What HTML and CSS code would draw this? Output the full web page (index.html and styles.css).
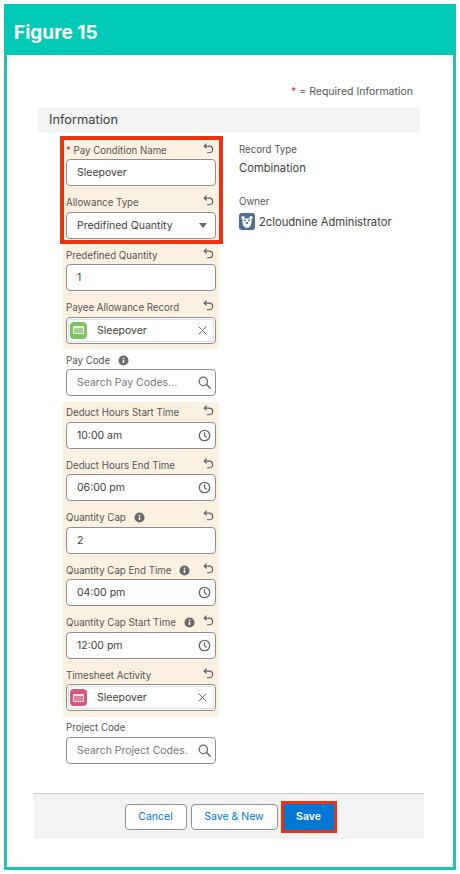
FILE: index.html
```html
<!DOCTYPE html>
<html lang="en">
<head>
    <meta charset="UTF-8">
    <meta name="viewport" content="width=device-width, initial-scale=1.0">
    <title>Figure 15</title>
    <link rel="stylesheet" href="styles.css">
</head>
<body>
    <svg class="sprites" width="0" height="0">
        <symbol id="undo" viewBox="0 0 12 12">
            <path d="M3.6 1 1.2 3.4l2.4 2.3M1.4 3.4h5.2a3.6 3.6 0 0 1 .6 7.2H4.8" fill="none" stroke="#5f5f5f" stroke-width="1.2" stroke-linecap="round" stroke-linejoin="round"/>
        </symbol>
        <symbol id="info" viewBox="0 0 12 12">
            <circle cx="6" cy="6" r="5.5" fill="#6b6b6b"/>
            <rect x="5.2" y="5.2" width="1.6" height="3.6" fill="#fff"/>
            <rect x="5.2" y="2.9" width="1.6" height="1.5" fill="#fff"/>
        </symbol>
        <symbol id="search" viewBox="0 0 14 14">
            <circle cx="5.8" cy="5.8" r="4.5" fill="none" stroke="#666" stroke-width="1.4"/>
            <path d="m9.2 9.2 4 4" stroke="#666" stroke-width="1.6" stroke-linecap="round"/>
        </symbol>
        <symbol id="clock" viewBox="0 0 14 14">
            <circle cx="7" cy="7" r="5.6" fill="none" stroke="#666" stroke-width="1.4"/>
            <path d="M7 3.8V7l2 2" fill="none" stroke="#666" stroke-width="1.3" stroke-linecap="round"/>
        </symbol>
        <symbol id="close" viewBox="0 0 10 10">
            <path d="m1 1 8 8M9 1 1 9" stroke="#666" stroke-width="1.1" stroke-linecap="round"/>
        </symbol>
    </svg>

    <div class="frame">
        <h1 class="frame-title">Figure 15</h1>
        <div class="sheet">
            <p class="required-note"><span class="star">*</span> = Required Information</p>
            <h2 class="section-title">Information</h2>

            <div class="columns">
                <div class="form-col">
                    <div class="changed">
                        <div class="callout">
                            <div class="field">
                                <div class="label-row">
                                    <label><span class="star">*</span> Pay Condition Name</label>
                                    <svg class="undo"><use href="#undo"/></svg>
                                </div>
                                <div class="input">Sleepover</div>
                            </div>
                            <div class="field">
                                <div class="label-row">
                                    <label>Allowance Type</label>
                                    <svg class="undo"><use href="#undo"/></svg>
                                </div>
                                <div class="input">Predifined Quantity<span class="caret"></span></div>
                            </div>
                        </div>
                        <div class="field">
                            <div class="label-row">
                                <label>Predefined Quantity</label>
                                <svg class="undo"><use href="#undo"/></svg>
                            </div>
                            <div class="input">1</div>
                        </div>
                        <div class="field">
                            <div class="label-row">
                                <label>Payee Allowance Record</label>
                                <svg class="undo"><use href="#undo"/></svg>
                            </div>
                            <div class="input lookup">
                                <div class="pill">
                                    <span class="record-icon green"><span class="card"></span></span>
                                    <span class="pill-text">Sleepover</span>
                                    <svg class="x"><use href="#close"/></svg>
                                </div>
                            </div>
                        </div>
                    </div>

                    <div class="field">
                        <div class="label-row">
                            <label>Pay Code</label>
                            <svg class="info"><use href="#info"/></svg>
                        </div>
                        <div class="input placeholder">Search Pay Codes...<svg class="end-icon"><use href="#search"/></svg></div>
                    </div>

                    <div class="changed">
                        <div class="field">
                            <div class="label-row">
                                <label>Deduct Hours Start Time</label>
                                <svg class="undo"><use href="#undo"/></svg>
                            </div>
                            <div class="input">10:00 am<svg class="end-icon"><use href="#clock"/></svg></div>
                        </div>
                        <div class="field">
                            <div class="label-row">
                                <label>Deduct Hours End Time</label>
                                <svg class="undo"><use href="#undo"/></svg>
                            </div>
                            <div class="input">06:00 pm<svg class="end-icon"><use href="#clock"/></svg></div>
                        </div>
                        <div class="field">
                            <div class="label-row">
                                <label>Quantity Cap</label>
                                <svg class="info"><use href="#info"/></svg>
                                <svg class="undo"><use href="#undo"/></svg>
                            </div>
                            <div class="input">2</div>
                        </div>
                        <div class="field">
                            <div class="label-row">
                                <label>Quantity Cap End Time</label>
                                <svg class="info"><use href="#info"/></svg>
                                <svg class="undo"><use href="#undo"/></svg>
                            </div>
                            <div class="input">04:00 pm<svg class="end-icon"><use href="#clock"/></svg></div>
                        </div>
                        <div class="field">
                            <div class="label-row">
                                <label>Quantity Cap Start Time</label>
                                <svg class="info"><use href="#info"/></svg>
                                <svg class="undo"><use href="#undo"/></svg>
                            </div>
                            <div class="input">12:00 pm<svg class="end-icon"><use href="#clock"/></svg></div>
                        </div>
                        <div class="field">
                            <div class="label-row">
                                <label>Timesheet Activity</label>
                                <svg class="undo"><use href="#undo"/></svg>
                            </div>
                            <div class="input lookup">
                                <div class="pill">
                                    <span class="record-icon pink"><span class="card"></span></span>
                                    <span class="pill-text">Sleepover</span>
                                    <svg class="x"><use href="#close"/></svg>
                                </div>
                            </div>
                        </div>
                    </div>

                    <div class="field">
                        <div class="label-row">
                            <label>Project Code</label>
                        </div>
                        <div class="input placeholder">Search Project Codes.<svg class="end-icon"><use href="#search"/></svg></div>
                    </div>
                </div>

                <div class="info-col">
                    <div class="info-item">
                        <div class="info-label">Record Type</div>
                        <div class="info-value">Combination</div>
                    </div>
                    <div class="info-item">
                        <div class="info-label">Owner</div>
                        <div class="info-value owner">
                            <svg class="avatar" viewBox="0 0 16 17">
                                <rect width="16" height="17" rx="3" fill="#4d6f94"/>
                                <circle cx="4" cy="4.6" r="1.7" fill="#fff"/>
                                <circle cx="12" cy="4.6" r="1.7" fill="#fff"/>
                                <path d="M3.6 5.4h8.8c.4 4 .2 8.6-4.4 9.6-4.6-1-4.8-5.6-4.4-9.6z" fill="#fff"/>
                                <circle cx="6" cy="7.4" r=".8" fill="#33475f"/>
                                <circle cx="10" cy="7.4" r=".8" fill="#33475f"/>
                                <ellipse cx="8" cy="9.8" rx="1.3" ry=".9" fill="#33475f"/>
                            </svg>
                            2cloudnine Administrator
                        </div>
                    </div>
                </div>
            </div>

            <div class="footer">
                <button class="btn">Cancel</button>
                <button class="btn save-new">Save &amp; New</button>
                <button class="btn primary">Save</button>
            </div>
        </div>
    </div>
</body>
</html>
```

FILE: styles.css
```css
body {
    margin: 0;
    font-family: 'Inter', 'Liberation Sans', sans-serif;
    color: #444;
    background: #fff;
}
.sprites {
    position: absolute;
}
.frame {
    margin: 4px 4px 0;
    width: 452px;
    height: 866px;
    box-sizing: border-box;
    border: 3px solid #1fc4b4;
    border-top: 0;
    display: flex;
    flex-direction: column;
}
.frame-title {
    margin: 0 -3px;
    height: 51px;
    padding-left: 10px;
    background: #00c9b5;
    color: #fff;
    font-size: 19px;
    font-weight: 700;
    line-height: 57px;
}
.sheet {
    flex: 1;
    padding: 0 29px 0 27px;
}
.required-note {
    margin: 29px 11px 0 0;
    height: 18px;
    text-align: right;
    font-size: 10.5px;
    line-height: 15px;
    color: #555;
}
.star {
    color: #c23934;
}
.section-title {
    margin: 5px 4px 0;
    height: 26px;
    padding-left: 11px;
    background: #f3f3f3;
    border-radius: 3px;
    font-size: 12.8px;
    font-weight: 400;
    line-height: 26px;
    color: #3e3e3c;
}
.columns {
    display: flex;
    padding-top: 6px;
    padding-left: 29px;
}
.form-col {
    width: 156px;
}
.changed {
    background: #fbf1e0;
}
.callout {
    position: relative;
}
.callout::after {
    content: "";
    position: absolute;
    top: -3px;
    left: -3px;
    right: -4px;
    bottom: 0;
    border: 4px solid #f0300f;
    pointer-events: none;
}
.field {
    height: 52.5px;
    box-sizing: border-box;
    padding: 0 3px;
}
.label-row {
    height: 20px;
    display: flex;
    align-items: center;
    gap: 8px;
    padding-top: 2px;
    box-sizing: border-box;
}
.label-row label {
    font-size: 9.7px;
    color: #555;
    white-space: nowrap;
}
.undo {
    width: 11px;
    height: 11px;
    margin-left: auto;
    margin-right: 2px;
    margin-top: -4px;
}
.info {
    width: 11px;
    height: 11px;
}
.input {
    height: 27px;
    box-sizing: border-box;
    position: relative;
    padding: 0 10px;
    background: #fff;
    border: 1px solid #8f8f8f;
    border-radius: 4px;
    font-size: 10.5px;
    line-height: 26px;
    color: #3e3e3c;
}
.placeholder {
    color: #777;
    white-space: nowrap;
}
.end-icon {
    position: absolute;
    right: 4px;
    top: 6px;
    width: 13px;
    height: 13px;
}
.caret {
    position: absolute;
    right: 8px;
    top: 10px;
    border-top: 5px solid #666;
    border-left: 4.5px solid transparent;
    border-right: 4.5px solid transparent;
}
.lookup {
    padding: 1px;
}
.pill {
    height: 23px;
    box-sizing: border-box;
    display: flex;
    align-items: center;
    border: 1px solid #ddd;
    border-radius: 3px;
    padding: 0 1px;
}
.record-icon {
    width: 17px;
    height: 17px;
    border-radius: 4px;
    display: flex;
    align-items: center;
    justify-content: center;
}
.green {
    background: #7ec45f;
}
.pink {
    background: #d9577c;
}
.card {
    width: 11px;
    height: 8px;
    box-sizing: border-box;
    background: rgba(255, 255, 255, 0.25);
    border: 1px solid rgba(255, 255, 255, 0.75);
    border-top-width: 2px;
    border-radius: 1px;
}
.pill-text {
    margin-left: 10px;
    flex: 1;
    line-height: 21px;
}
.x {
    width: 9px;
    height: 9px;
    margin-right: 5px;
}
.info-col {
    margin-left: 20px;
    padding-top: 4px;
}
.info-item {
    height: 52px;
}
.info-label {
    font-size: 9.7px;
    line-height: 14px;
    color: #555;
}
.info-value {
    margin-top: 3px;
    font-size: 11.2px;
    line-height: 16px;
    color: #3e3e3c;
}
.owner {
    margin-top: 4px;
    display: flex;
    align-items: center;
    gap: 4px;
    white-space: nowrap;
}
.avatar {
    width: 16px;
    height: 17px;
}
.footer {
    margin-top: 24px;
    height: 46px;
    box-sizing: border-box;
    border-top: 1.5px solid #ccc;
    background: #f3f3f3;
    display: flex;
    justify-content: center;
    align-items: center;
    gap: 4px;
}
.btn {
    height: 26px;
    width: 62px;
    padding: 0;
    background: #fff;
    border: 1px solid #8f8f8f;
    border-radius: 4px;
    font-family: inherit;
    font-size: 10.5px;
    color: #0176d3;
}
.save-new {
    width: 87px;
}
.primary {
    width: 50px;
    margin-left: 2px;
    background: #0176d3;
    border-color: #0176d3;
    border-radius: 0;
    color: #fff;
    font-weight: 600;
    outline: 3px solid #f0300f;
}
```
